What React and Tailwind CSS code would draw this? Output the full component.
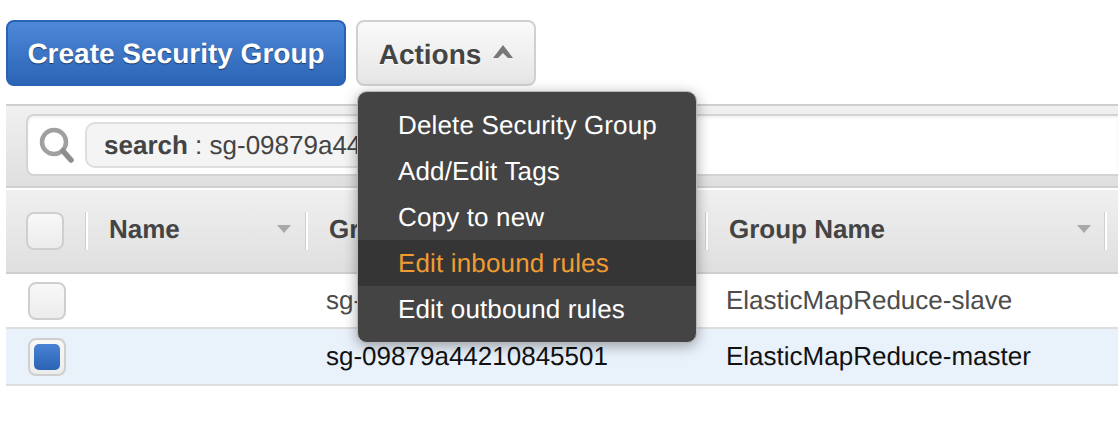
import React from "react";

function Caret() {
  return <svg width="16" height="10" viewBox="0 0 16 10" className="shrink-0"><path d="M1 1h14L8 9z" fill="#a9a9a9" /></svg>;
}

function Sep() {
  return <div className="w-[3px] h-[38px] shrink-0 border-l border-[#cfcfcf] bg-white" />;
}

function Check({ checked, className }) {
  return (
    <div className={"w-[38px] h-[38px] rounded-[8px] border-2 border-[#cfcfcf] bg-gradient-to-b from-[#f8f8f8] to-[#ececec] flex items-center justify-center shrink-0 " + className}>
      {checked && <div className="w-[26px] h-[26px] rounded-[5px] bg-gradient-to-b from-[#4a83d4] to-[#2a62b4]" />}
    </div>
  );
}

const items = ["Delete Security Group", "Add/Edit Tags", "Copy to new", "Edit inbound rules", "Edit outbound rules"];

export default function App() {
  return (
    <div className="relative w-[1118px] h-[438px] overflow-hidden bg-white text-[#444] [text-rendering:geometricPrecision] font-['Liberation_Sans',Arial,sans-serif]">
      <div className="flex gap-[10px] pl-[6px] pt-[20px]">
        <div className="w-[340px] h-[66px] pt-[2px] rounded-[8px] border-2 border-[#2a62b4] bg-gradient-to-b from-[#4f88d8] to-[#2c64b6] text-white text-[28px] font-bold flex items-center justify-center [text-shadow:0_1px_1px_rgba(0,0,0,0.5)]">
          Create Security Group
        </div>
        <div className="w-[180px] h-[66px] pt-[3px] rounded-[8px] border-2 border-[#d0d0d0] bg-gradient-to-b from-[#fafafa] to-[#e6e6e6] text-[28px] font-bold flex items-center justify-center gap-[12px] [text-shadow:0_1px_0_#fff]">
          Actions
          <svg width="20" height="13" viewBox="0 0 20 13" className="mb-[6px]"><path d="M0 13 10 0l10 13h-5l-5-5-5 5z" fill="#787878" /></svg>
        </div>
      </div>

      <div className="ml-[6px] mt-[18px] h-[84px] border-y-2 border-[#cfcfcf] bg-gradient-to-b from-[#f0f0f0] to-[#dfdfdf]" />

      <div className="absolute left-[26px] top-[114px] right-0 h-[62px] rounded-l-[8px] border-y-2 border-l-2 border-[#d4d4d4] bg-white shadow-[inset_0_2px_3px_rgba(0,0,0,0.05)] flex items-center pl-[11px] gap-[10px]">
        <svg width="36" height="38" viewBox="0 0 36 38" className="shrink-0">
          <circle cx="15" cy="16" r="12" fill="none" stroke="#a0a0a0" strokeWidth="4.500" />
          <path d="M24 25 32 34" stroke="#8d8d8d" strokeWidth="5.500" strokeLinecap="round" />
        </svg>
        <div className="h-[46px] w-[300px] rounded-[10px] border-2 border-[#dedede] bg-[#f4f4f4] flex items-center pl-[17px] text-[26px] whitespace-pre">
          <b>search</b> : sg-09879a44
        </div>
      </div>

      <div className="ml-[6px] mt-[2px] h-[84px] border-b-2 border-[#cfcfcf] bg-gradient-to-b from-[#f0f0f0] to-[#dfdfdf] flex items-start pt-[22px] text-[26px] font-bold">
        <Check className="ml-[20px]" />
        <div className="ml-[21px]"><Sep /></div>
        <div className="w-[217px] h-[34px] pl-[21px] pr-[13px] flex items-center justify-between"><span>Name</span><Caret /></div>
        <Sep />
        <div className="w-[397px] h-[34px] pl-[21px] flex items-center">Group ID</div>
        <Sep />
        <div className="w-[396px] h-[34px] pl-[21px] pr-[12px] flex items-center justify-between"><span>Group Name</span><Caret /></div>
        <Sep />
      </div>

      <div className="ml-[6px] h-[55px] border-b-2 border-[#dedede] flex items-center text-[26px] text-[#4c4c4c]">
        <Check className="ml-[22px]" />
        <div className="ml-[260px] w-[400px]">sg-0a1b2c3d4e5f60718</div>
        <div>ElasticMapReduce-slave</div>
      </div>
      <div className="ml-[6px] h-[57px] border-b-2 border-[#dedede] bg-[#e9f1fb] flex items-center text-[26px] text-[#111]">
        <Check checked className="ml-[22px]" />
        <div className="ml-[260px] w-[400px]">sg-09879a44210845501</div>
        <div>ElasticMapReduce-master</div>
      </div>

      <div className="absolute left-[357px] top-[91px] w-[340px] h-[252px] rounded-[10px] border border-[#b8b8b8] bg-[#444] shadow-[0_3px_14px_rgba(0,0,0,0.35)] pt-[10px] text-[26px] tracking-[0.15px] text-white">
        {items.map((t, i) => (
          <div key={t} className={"h-[46px] pl-[40px] flex items-center " + (i === 3 ? "bg-[#353535] text-[#f09c32]" : "")}>{t}</div>
        ))}
      </div>
    </div>
  );
}
